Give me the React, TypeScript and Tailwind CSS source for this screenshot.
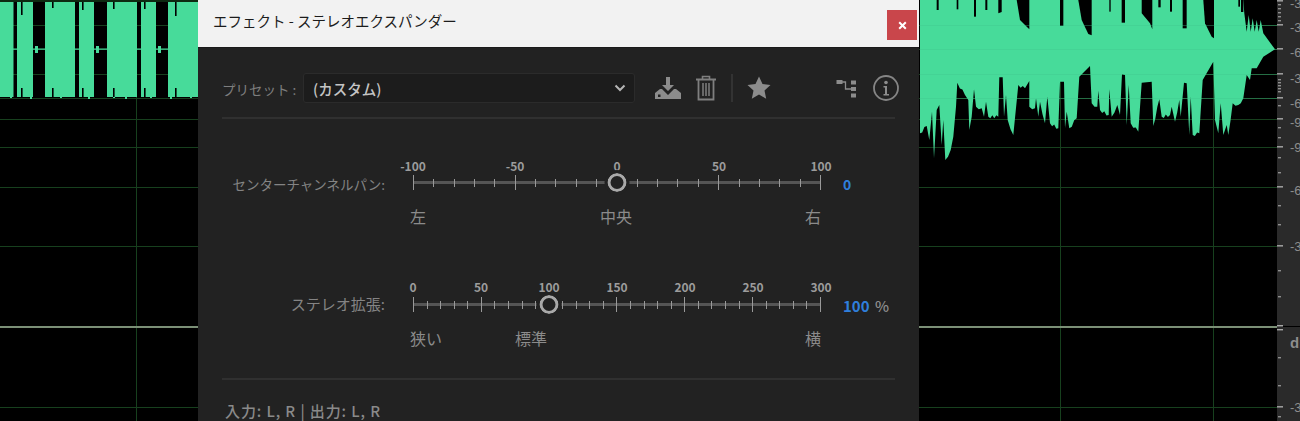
const FONT = "font-['Noto_Sans_CJK_JP','Noto_Sans',sans-serif]";

const GREEN = "#47db9a";
const GRID = "#17401e";
const bottomRaw: [number, number][] = [[30,400],[50,378],[58,420],[66,335],[72,475],[80,330],[88,315],[95,435],[100,360],[106,480],[122,450],[130,410],[138,320],[142,248],[165,285],[175,300],[178,390],[185,350],[192,268],[198,320],[215,325],[222,350],[228,305],[235,350],[265,350],[268,232],[278,232],[282,350],[288,285],[293,360],[310,405],[325,255],[345,265],[358,243],[358,320],[375,325],[378,295],[385,350],[390,305],[405,370],[412,290],[420,370],[445,385],[450,245],[462,245],[465,385],[470,335],[478,385],[500,355],[508,230],[540,198],[545,310],[562,320],[565,272],[570,330],[596,345],[598,268],[605,350],[622,315],[630,345],[636,222],[645,225],[650,375],[656,255],[662,370],[685,395],[695,248],[725,245],[730,378],[748,298],[755,350],[780,345],[785,320],[795,365],[808,300],[812,350],[822,248],[830,250],[838,405],[842,290],[848,405],[868,400],[878,240],[910,185],[915,360],[925,400],[932,310],[940,405],[950,375],[955,405],[968,310],[985,315],[1000,295],[1010,225],[1020,240],[1025,205],[1040,205],[1060,170],[1095,148]];
const bottomPts: [number, number][] = [];
bottomRaw.forEach(([x, y], i) => {
  const prev = bottomRaw[i - 1];
  if (prev && x - prev[0] >= 12 && y > 260) {
    const steps = Math.floor((x - prev[0]) / 6);
    for (let s = 1; s < steps; s++) {
      const t = s / steps;
      bottomPts.push([prev[0] + (x - prev[0]) * t, prev[1] + (y - prev[1]) * t + (s % 2 ? 5 : -4)]);
    }
  }
  bottomPts.push([x, y]);
});
const topPts: [number, number][] = [[1095,148],[1060,100],[1052,60],[1046,95],[1040,60],[1034,95],[1028,55],[1022,95],[1016,45],[1010,95],[1003,40],[1000,0]];
const notches: [number, number, number, number][] = [[80,0,86,30],[140,0,145,28],[192,0,198,50],[226,0,232,30],[450,0,460,78],[598,0,602,35],[635,0,645,68],[745,0,752,22],[780,0,786,35],[818,0,830,85],[985,0,990,20],[993,0,1000,36]];
const notchPolys = [
  "265,0 275,0 275,36 265,40",
  "320,0 358,0 358,88 345,75 330,60",
  "505,0 545,0 545,106 535,102 515,60",
  "695,0 727,0 727,88 720,70 695,40",
  "880,0 912,0 912,115 905,110 885,70",
];
const z = (x: number, y: number) => `${(910 + x / 3).toFixed(1)},${(y / 3).toFixed(1)}`;
const wavePoly = [z(30, 0), ...bottomPts.map(([x, y]) => z(x, y)), ...topPts.map(([x, y]) => z(x, y))].join(" ");

const leftBlocks: [number, number][] = [[0,13.5],[17,33],[45,75],[79,94],[107,137],[141,156],[168,198]];
const leftSpikes: [number, number, number][] = [[21,2,15],[52,2,8],[82,2,10],[113,2,9],[144,2,9],[175,2,16]];
const blobs = [35, 96, 158];
const rows = [25, 49, 74, 98, 119, 147, 187, 246, 407];

function Wave() {
  return (
    <svg width={1277} height={421} viewBox="0 0 1277 421" className="block shrink-0">
      <rect width={1277} height={421} fill="#000" />
      {rows.map((y) => (
        <rect key={y} x={0} y={y} width={1277} height={1} fill={GRID} />
      ))}
      {[136, 1060, 1213].map((x) => (
        <rect key={x} x={x} y={0} width={1} height={421} fill={GRID} />
      ))}
      <rect x={0} y={326} width={1277} height={2} fill="#7b8f76" />
      <rect x={0} y={48.5} width={198} height={1.2} fill={GREEN} />
      {leftBlocks.map(([a, b]) => (
        <rect key={a} x={a} y={2} width={b - a} height={95} fill={GREEN} />
      ))}
      {blobs.map((x) => (
        <rect key={x} x={x} y={46} width={3} height={7} fill={GREEN} />
      ))}
      {leftSpikes.map(([x, y, h]) => (
        <g key={x}>
          <rect x={x} y={y} width={1.6} height={h - 2} fill="#000" />
          <rect x={x} y={88} width={1.6} height={9} fill="#000" />
        </g>
      ))}
      <rect x={0} y={0} width={198} height={2} fill="#0e2a12" />
      {[10, 30, 60, 88, 113, 125, 150, 170, 190].map((x, i) => (
        <rect key={x} x={x} y={97} width={2} height={1 + (i % 2)} fill={GREEN} />
      ))}
      <polygon points={wavePoly} fill={GREEN} />
      {notches.map(([a, b, c, d]) => (
        <rect key={a} x={910 + a / 3} y={b} width={(c - a) / 3} height={d / 3} fill="#000" />
      ))}
      {notchPolys.map((p) => (
        <polygon key={p} points={p.split(" ").map((s) => { const [x, y] = s.split(",").map(Number); return z(x, y); }).join(" ")} fill="#000" />
      ))}
      {[25, 49, 74, 98].map((y) => (
        <rect key={y} x={920} y={y} width={357} height={1} fill="#3fc78b" opacity={0.35} />
      ))}
    </svg>
  );
}

function Ruler() {
  const major = [1, 25, 49, 74, 98, 119, 147, 187, 246, 407];
  const minor = [4, 8, 12, 16, 20, 79, 82, 85, 88, 91, 105, 127, 137, 157, 172, 205, 224, 270, 296, 357, 385, 416];
  const labels: [string, number][] = [["-3", 8], ["-3", 32], ["-6", 57], ["-3", 83], ["-6", 108], ["-9", 127], ["-9", 152], ["-6", 195], ["-3", 251], ["-3", 412]];
  return (
    <div className="relative h-[421px] w-[23px] shrink-0 overflow-hidden bg-[#2a2a2a]">
      <svg width={23} height={421} className="absolute inset-0">
        {major.map((y) => <rect key={y} x={0} y={y - 1} width={6} height={1.6} fill="#9a9a9a" />)}
        {minor.map((y) => <rect key={y} x={1} y={y} width={3} height={1.4} fill="#8f8f8f" />)}
        <rect x={0} y={325} width={6} height={1.4} fill="#aaa" />
        <rect x={0} y={329} width={6} height={1.4} fill="#aaa" />
        <rect x={6} y={326} width={17} height={1} fill="#000" />
        {labels.map(([t, y], i) => (
          <text key={i} x={13} y={y} fontSize={13} fontFamily="Liberation Sans" fill="#8d8d8d">{t}</text>
        ))}
        <text x={13} y={348} fontSize={15} fontFamily="Liberation Sans" fontWeight={700} fill="#8d8d8d">dB</text>
      </svg>
    </div>
  );
}

function Slider({ labels, value, ticks, wide }: { labels: string[]; value: number; ticks: number; wide?: boolean }) {
  const n = (labels.length - 1) * (ticks + 1) + 1;
  return (
    <div className="relative w-[408px] shrink-0">
      <div className="flex h-[13px] justify-between text-[12px] font-semibold leading-[13px] text-[#9c9c9c]">
        {labels.map((l) => (
          <div key={l} className="flex w-0 justify-center whitespace-nowrap">{l}</div>
        ))}
      </div>
      <div className={wide ? "relative mt-[4px] flex h-[15px] items-center justify-between" : "relative mt-[3px] flex h-[15px] items-center justify-between"}>
        <div className="absolute inset-x-0 top-[6px] h-[3px] bg-[#555]" />
        {Array.from({ length: n }, (_, i) => (
          <div key={i} className={i % (ticks + 1) === 0 ? "relative h-[15px] w-px bg-[#999]" : "relative h-[8px] w-px bg-[#999]"} />
        ))}
        <div className="absolute top-[-2px] h-[19px] w-[19px] -translate-x-1/2 rounded-full border-[3px] border-[#a9a9a9] bg-[#222] outline-[3px] outline-[#222]" style={{ left: `${value}%` }} />
      </div>
    </div>
  );
}

function Dialog() {
  return (
    <div className={`absolute left-[198px] top-0 flex h-[421px] w-[721px] flex-col overflow-hidden bg-[#222222] ${FONT}`}>
      <div className="flex h-[48px] shrink-0 items-center justify-between border-b border-[#1a1a1a] bg-[#f2f2f2] pl-[15px] pr-[2px]">
        <span className="mb-[4px] text-[14.5px] leading-none text-[#1c1c1c]">エフェクト - ステレオエクスパンダー</span>
        <div className="mt-[3px] flex h-[30px] w-[30px] items-center justify-center bg-[#c9464b]">
          <svg width="9" height="9" viewBox="0 0 9 9"><path d="M1.2 1.2 7.8 7.8M7.8 1.2 1.2 7.8" stroke="#fff" strokeWidth="2" /></svg>
        </div>
      </div>

      <div className="flex flex-col px-[24px]">
        <div className="flex h-[71px] items-center border-b-2 border-[#303030] pt-[10px]">
          <span className="w-[81px] shrink-0 whitespace-nowrap pt-[3px] text-[13.5px] text-[#7e7e7e]">プリセット :</span>
          <div className="flex h-[30px] w-[332px] shrink-0 items-center justify-between rounded-[3px] border border-[#2b2b2b] bg-[#1c1c1c] pl-[9px] pr-[8px]">
            <span className="pt-[2px] text-[14.5px] font-medium text-[#c4c4c4]">(カスタム)</span>
            <svg width="12" height="8" viewBox="0 0 12 8"><path d="M1.5 1.5 6 6l4.5-4.5" fill="none" stroke="#b5b5b5" strokeWidth="2" /></svg>
          </div>
          <svg width="28" height="24" viewBox="0 0 28 24" className="ml-[19px] shrink-0">
            <path d="M12 1h4v8h4l-6 6-6-6h4z" fill="#8c8c8c" />
            <path d="M6 13h2l6 6 6-6h2l5 4v6H1v-6z" fill="#8c8c8c" />
            <rect x="4" y="18.5" width="2.5" height="2.5" fill="#222" />
          </svg>
          <svg width="22" height="26" viewBox="0 0 22 26" className="ml-[13px] shrink-0">
            <path d="M1 4.5h20" stroke="#7f7f7f" strokeWidth="2" />
            <path d="M7.5 4V1.5h7V4" fill="none" stroke="#7f7f7f" strokeWidth="1.6" />
            <path d="M3.5 5v19.5h15V5" fill="none" stroke="#7f7f7f" strokeWidth="1.8" />
            <path d="M8 8v13M11 8v13M14 8v13" stroke="#7f7f7f" strokeWidth="1.5" />
          </svg>
          <div className="ml-[14px] h-[28px] w-[2px] shrink-0 bg-[#333]" />
          <svg width="24" height="23" viewBox="0 0 24 23" className="ml-[14px] shrink-0">
            <path d="M12 0.5l3.5 7.6 8 .9-6 5.5 1.7 8.2L12 18.6 4.8 22.7l1.7-8.2-6-5.5 8-.9z" fill="#8c8c8c" />
          </svg>
          <svg width="22" height="20" viewBox="0 0 22 20" className="ml-[65px] shrink-0">
            <rect x="0.5" y="2" width="6" height="4" fill="#8c8c8c" />
            <rect x="15" y="2.5" width="5" height="4" fill="#8c8c8c" />
            <rect x="15" y="9" width="5" height="4" fill="#8c8c8c" />
            <rect x="15" y="15.5" width="5" height="4" fill="#8c8c8c" />
            <path d="M6 4h3.5v7H15" fill="none" stroke="#8c8c8c" strokeWidth="1.3" />
          </svg>
          <svg width="26" height="26" viewBox="0 0 26 26" className="ml-[15px] shrink-0">
            <circle cx="13" cy="13" r="12" fill="none" stroke="#858585" strokeWidth="1.8" />
            <circle cx="13" cy="7.5" r="1.8" fill="#8c8c8c" />
            <path d="M10.5 11h3.5v8h2v1.5H10.5V19h1.5v-6.5h-1.5z" fill="#8c8c8c" />
          </svg>
        </div>

        <div className="mt-[40px] flex items-start">
          <div className="w-[163px] shrink-0 whitespace-nowrap pt-[15px] text-right text-[13.5px] leading-[20px] text-[#848484]">センターチャンネルパン:</div>
          <div className="ml-[28px] w-[408px]">
            <Slider labels={["-100", "-50", "0", "50", "100"]} value={50} ticks={4} />
          </div>
          <div className="ml-[22px] pt-[15px] text-[14px] font-semibold leading-[20px] text-[#2f7fdc]">0</div>
        </div>
        <div className="ml-[188px] mt-[12px] flex w-[411px] justify-between text-[16px] leading-[20px] text-[#8b8b8b]">
          <span>左</span>
          <span className="ml-[1px]">中央</span>
          <span>右</span>
        </div>

        <div className="mt-[54px] flex items-start">
          <div className="w-[163px] shrink-0 whitespace-nowrap pt-[14px] text-right text-[15px] leading-[20px] text-[#848484]">ステレオ拡張:</div>
          <div className="ml-[28px] w-[408px]">
            <Slider labels={["0", "50", "100", "150", "200", "250", "300"]} value={33.33} ticks={4} wide />
          </div>
          <div className="ml-[22px] whitespace-nowrap pt-[16px] text-[15px] font-semibold leading-[20px] text-[#2f7fdc]">
            100 <span className="ml-[2px] font-medium text-[#8d8d8d]">%</span>
          </div>
        </div>
        <div className="ml-[188px] mt-[12px] flex w-[411px] justify-between text-[16px] leading-[20px] text-[#8b8b8b]">
          <span>狭い</span>
          <span className="mr-[185px]">標準</span>
          <span>横</span>
        </div>

        <div className="mt-[30px] border-t-2 border-[#303030] pl-[3px] pt-[21px] text-[15px] font-medium leading-[20px] tracking-[0.9px] text-[#8a8a8a]">
          入力: L, R | 出力: L, R
        </div>
      </div>
    </div>
  );
}

export default function App() {
  return (
    <div className="relative flex h-[421px] w-[1300px] overflow-hidden bg-black">
      <Wave />
      <Ruler />
      <Dialog />
    </div>
  );
}
